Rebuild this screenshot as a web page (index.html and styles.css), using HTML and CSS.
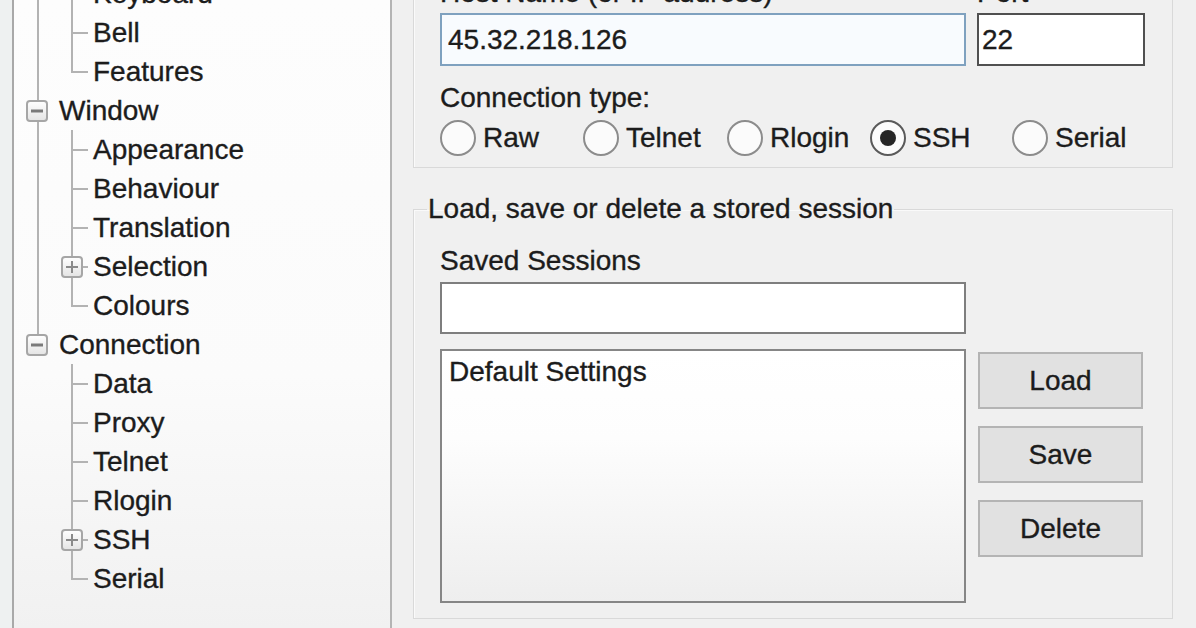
FILE: index.html
```html
<!DOCTYPE html>
<html lang="en">
<head>
<meta charset="utf-8">
<title>PuTTY Configuration</title>
<link rel="stylesheet" href="styles.css">
</head>
<body>
<div class="window">
  <nav class="tree">
    <div class="tree-list">
      <div class="row"><span class="ga v"></span><span class="gb tee"></span><span class="lbl">Keyboard</span></div>
      <div class="row"><span class="ga v"></span><span class="gb tee"></span><span class="lbl">Bell</span></div>
      <div class="row"><span class="ga v"></span><span class="gb ell"></span><span class="lbl">Features</span></div>
      <div class="row"><span class="ga v"><svg class="exp" viewBox="0 0 22 22"><defs><linearGradient id="eg1" x1="0" y1="0" x2="0" y2="1"><stop offset="0" stop-color="#ffffff"/><stop offset="1" stop-color="#e4e4e4"/></linearGradient></defs><rect x="1" y="1" width="20" height="20" rx="3" fill="url(#eg1)" stroke="#a6a6a6" stroke-width="2"/><path d="M5 11h12" stroke="#7a7a7a" stroke-width="3"/></svg></span><span class="lbl">Window</span></div>
      <div class="row"><span class="ga v"></span><span class="gb tee"></span><span class="lbl">Appearance</span></div>
      <div class="row"><span class="ga v"></span><span class="gb tee"></span><span class="lbl">Behaviour</span></div>
      <div class="row"><span class="ga v"></span><span class="gb tee"></span><span class="lbl">Translation</span></div>
      <div class="row"><span class="ga v"></span><span class="gb tee"><svg class="exp" viewBox="0 0 22 22"><rect x="1" y="1" width="20" height="20" rx="3" fill="url(#eg1)" stroke="#a6a6a6" stroke-width="2"/><path d="M5 11h12M11 5v12" stroke="#8a8a8a" stroke-width="2"/></svg></span><span class="lbl">Selection</span></div>
      <div class="row"><span class="ga v"></span><span class="gb ell"></span><span class="lbl">Colours</span></div>
      <div class="row"><span class="ga vtop"><svg class="exp" viewBox="0 0 22 22"><rect x="1" y="1" width="20" height="20" rx="3" fill="url(#eg1)" stroke="#a6a6a6" stroke-width="2"/><path d="M5 11h12" stroke="#7a7a7a" stroke-width="3"/></svg></span><span class="lbl">Connection</span></div>
      <div class="row"><span class="ga"></span><span class="gb tee"></span><span class="lbl">Data</span></div>
      <div class="row"><span class="ga"></span><span class="gb tee"></span><span class="lbl">Proxy</span></div>
      <div class="row"><span class="ga"></span><span class="gb tee"></span><span class="lbl">Telnet</span></div>
      <div class="row"><span class="ga"></span><span class="gb tee"></span><span class="lbl">Rlogin</span></div>
      <div class="row"><span class="ga"></span><span class="gb tee"><svg class="exp" viewBox="0 0 22 22"><rect x="1" y="1" width="20" height="20" rx="3" fill="url(#eg1)" stroke="#a6a6a6" stroke-width="2"/><path d="M5 11h12M11 5v12" stroke="#8a8a8a" stroke-width="2"/></svg></span><span class="lbl">SSH</span></div>
      <div class="row"><span class="ga"></span><span class="gb ell"></span><span class="lbl">Serial</span></div>
    </div>
  </nav>

  <main class="panel">
    <section class="group host-group">
      <div class="field-labels">
        <span class="host-col">Host Name (or IP address)</span>
        <span class="port-col">Port</span>
      </div>
      <div class="fields">
        <div class="input host-input host-col">45.32.218.126</div>
        <div class="input port-input port-col">22</div>
      </div>
      <div class="ctype">Connection type:</div>
      <div class="radios">
        <label class="radio"><span class="dot"></span>Raw</label>
        <label class="radio"><span class="dot"></span>Telnet</label>
        <label class="radio"><span class="dot"></span>Rlogin</label>
        <label class="radio"><span class="dot checked"></span>SSH</label>
        <label class="radio"><span class="dot"></span>Serial</label>
      </div>
    </section>

    <fieldset class="group sessions">
      <legend>Load, save or delete a stored session</legend>
      <div class="sess-body">
        <div class="sess-label">Saved Sessions</div>
        <div class="input sess-input"></div>
        <div class="sess-row">
          <div class="listbox">Default Settings</div>
          <div class="buttons">
            <div class="btn">Load</div>
            <div class="btn">Save</div>
            <div class="btn">Delete</div>
          </div>
        </div>
      </div>
    </fieldset>
  </main>
</div>
</body>
</html>
```

FILE: styles.css
```css
* { box-sizing: border-box; }

html, body {
  margin: 0;
  padding: 0;
  width: 1196px;
  height: 628px;
  overflow: hidden;
}

body {
  font-family: "Liberation Sans", Arial, sans-serif;
  font-size: 28px;
  color: #1c1c1c;
  -webkit-text-stroke: 0.35px #1c1c1c;
  background: #f0f0f0;
}

.window {
  display: flex;
  width: 1196px;
  height: 628px;
  background: linear-gradient(90deg, #eef1f1 0, #eef1f1 13px, #f0f0f0 13px);
}

/* ---------- tree ---------- */
.tree {
  margin-left: 12px;
  width: 380px;
  height: 628px;
  border-left: 2px solid #a9a9a9;
  border-right: 2px solid #b4b4b4;
  background: linear-gradient(180deg, #fdfdfd 0%, #fbfbfb 60%, #f1f1f1 100%);
  overflow: hidden;
}

.tree-list {
  margin-top: -26px;
}

.row {
  display: flex;
  align-items: center;
  height: 39px;
}

.ga {
  flex: none;
  width: 45px;
  height: 39px;
  display: flex;
  align-items: center;
}

.ga .exp {
  margin-left: 12px;
}

.ga.v {
  background: linear-gradient(#b3b3b3, #b3b3b3) 23px 0 / 2px 100% no-repeat;
}

.ga.vtop {
  background: linear-gradient(#b3b3b3, #b3b3b3) 23px 0 / 2px 20px no-repeat;
}

.gb {
  flex: none;
  width: 34px;
  height: 39px;
  display: flex;
  align-items: center;
}

.gb .exp {
  margin-left: 2px;
}

.gb.tee {
  background:
    linear-gradient(#b3b3b3, #b3b3b3) 12px 0 / 2px 100% no-repeat,
    linear-gradient(#b3b3b3, #b3b3b3) 12px 19px / 17px 2px no-repeat;
}

.gb.ell {
  background:
    linear-gradient(#b3b3b3, #b3b3b3) 12px 0 / 2px 21px no-repeat,
    linear-gradient(#b3b3b3, #b3b3b3) 12px 19px / 17px 2px no-repeat;
}

.exp {
  width: 22px;
  height: 22px;
  display: block;
}

.lbl {
  line-height: 39px;
  white-space: nowrap;
}

/* ---------- right panel ---------- */
.panel {
  flex: 1;
  padding-left: 21px;
  display: flex;
  flex-direction: column;
}

.group {
  width: 760px;
  border: 1px solid #d9d9d9;
  box-shadow: inset 1px 1px 0 #fafafa;
}

.host-group {
  margin-top: -60px;
  padding: 36px 0 11px 26px;
}

.field-labels,
.fields {
  display: flex;
}

.field-labels {
  height: 32px;
  line-height: 32px;
  margin-bottom: 4px;
  white-space: nowrap;
}

.host-col { width: 526px; }
.port-col { width: 168px; margin-left: 11px; }

.input {
  height: 53px;
  line-height: 49px;
  padding-left: 6px;
  background: #fff;
  border: 2px solid #7e7e7e;
  white-space: nowrap;
}

.host-input {
  border-color: #7fa1bf;
  background: #f8fbfe;
}

.port-input {
  border-color: #505050;
  padding-left: 3px;
}

.ctype {
  margin-top: 16px;
  height: 32px;
  line-height: 32px;
}

.radios {
  margin-top: 6px;
  height: 36px;
  display: grid;
  grid-template-columns: 143px 144px 143px 142px auto;
}

.radio {
  display: flex;
  align-items: center;
  white-space: nowrap;
}

.dot {
  flex: none;
  width: 36px;
  height: 36px;
  margin-right: 7px;
  border: 2px solid #8c8c8c;
  border-radius: 50%;
  background: #fbfbfb;
  display: flex;
  align-items: center;
  justify-content: center;
}

.dot.checked {
  border-color: #5a5a5a;
}

.dot.checked::after {
  content: "";
  width: 16px;
  height: 16px;
  border-radius: 50%;
  background: #262626;
}

/* ---------- sessions ---------- */
.sessions {
  margin: 25px 0 0 0;
  padding: 20px 0 15px 13px;
  min-width: 0;
}

.sessions legend {
  padding: 0 1px;
  line-height: 32px;
  white-space: nowrap;
}

.sess-body {
  margin-left: 13px;
}

.sess-label {
  height: 32px;
  line-height: 32px;
}

.sess-input {
  margin-top: 5px;
  width: 526px;
  height: 52px;
}

.sess-row {
  margin-top: 15px;
  display: flex;
  align-items: flex-start;
}

.listbox {
  width: 526px;
  height: 254px;
  padding: 5px 7px;
  line-height: 32px;
  border: 2px solid #868686;
  background: linear-gradient(180deg, #ffffff 0%, #fdfdfd 35%, #eeeeee 100%);
}

.buttons {
  margin-left: 12px;
  padding-top: 3px;
  display: flex;
  flex-direction: column;
  gap: 17px;
}

.btn {
  width: 165px;
  height: 57px;
  line-height: 53px;
  text-align: center;
  background: #e1e1e1;
  border: 2px solid #b4b4b4;
}
```
